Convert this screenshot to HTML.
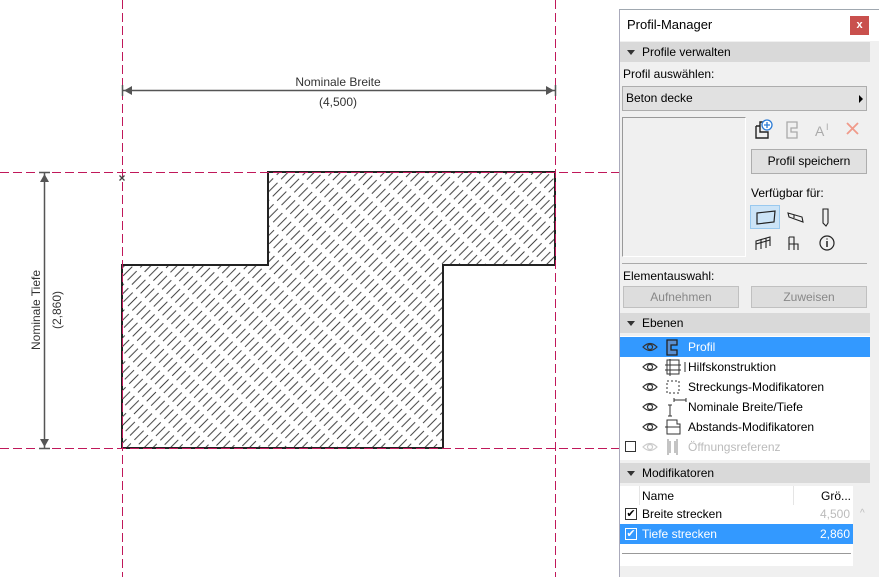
<!DOCTYPE html>
<html><head><meta charset="utf-8"><style>
*{margin:0;padding:0;box-sizing:border-box}
body{width:879px;height:577px;overflow:hidden;background:#fff;font-family:"Liberation Sans",sans-serif;font-size:12px;color:#000;position:relative}
.a{position:absolute}
.hdr{position:absolute;left:620px;width:250px;height:20px;background:#d9d9d9;font-size:12px;line-height:20px;padding-left:22px}
.hdr:before{content:"";position:absolute;left:7px;top:8px;border-left:4px solid transparent;border-right:4px solid transparent;border-top:5px solid #333}
.btn{position:absolute;background:#e1e1e1;border:1px solid #adadad;text-align:center;line-height:22px}
.row{position:absolute;left:620px;width:250px;height:20px;line-height:20px}
.row .t{position:absolute;left:68px}
.row svg{position:absolute;left:0;top:0}
</style></head><body>
<svg class="a" style="left:0;top:0" width="620" height="577">
<defs>
<pattern id="h" width="18" height="6.2" patternUnits="userSpaceOnUse" patternTransform="rotate(-45)">
<line x1="0" y1="3.1" x2="18" y2="3.1" stroke="#111" stroke-width="0.8" stroke-dasharray="13,5"/>
</pattern>
</defs>
<polygon points="268,172 555,172 555,265 443,265 443,448 122,448 122,265 268,265" fill="url(#h)" stroke="#222" stroke-width="2"/>
<g stroke="#c0185a" stroke-width="1" stroke-dasharray="9,4">
<line x1="122.5" y1="0" x2="122.5" y2="577"/>
<line x1="555.5" y1="0" x2="555.5" y2="577"/>
<line x1="0" y1="172.5" x2="620" y2="172.5"/>
<line x1="0" y1="448.5" x2="620" y2="448.5"/>
</g>
<g stroke="#555" stroke-width="1.5" fill="#555">
<line x1="123" y1="90.5" x2="555" y2="90.5"/>
<line x1="122.5" y1="85" x2="122.5" y2="96"/><line x1="555.5" y1="85" x2="555.5" y2="96"/>
<polygon points="124,90.5 132,86 132,95" stroke="none"/>
<polygon points="554,90.5 546,86 546,95" stroke="none"/>
<line x1="44.5" y1="173" x2="44.5" y2="448"/>
<line x1="39" y1="172.5" x2="50" y2="172.5"/><line x1="39" y1="448.5" x2="50" y2="448.5"/>
<polygon points="44.5,174 40,182 49,182" stroke="none"/>
<polygon points="44.5,447 40,439 49,439" stroke="none"/>
</g>
<text x="338" y="86" font-size="12" fill="#333" text-anchor="middle" font-family="Liberation Sans">Nominale Breite</text>
<text x="338" y="106" font-size="12" fill="#333" text-anchor="middle" font-family="Liberation Sans">(4,500)</text>
<g transform="translate(40,310) rotate(-90)" font-size="12" fill="#333" font-family="Liberation Sans" text-anchor="middle">
<text x="0" y="0">Nominale Tiefe</text><text x="0" y="21">(2,860)</text></g>
<path d="M119.5,175.5 l5,5 M124.5,175.5 l-5,5" stroke="#444" stroke-width="1.3"/>
</svg>
<div class="a" style="left:619px;top:9px;width:260px;height:568px;background:#f0f0f0;border-left:1px solid #aab;border-top:1px solid #a0a8b0"></div>
<div class="a" style="left:620px;top:10px;width:259px;height:31px;background:#fff"></div>
<div class="a" style="left:627px;top:17px;font-size:13px">Profil-Manager</div>
<div class="a" style="left:850px;top:16px;width:19px;height:19px;background:#c9504d;color:#fff;font-size:11px;text-align:center;line-height:18px;font-weight:bold">x</div>
<div class="hdr" style="top:42px">Profile verwalten</div>
<div class="a" style="left:623px;top:67px">Profil auswählen:</div>
<div class="a" style="left:622px;top:86px;width:245px;height:25px;background:#e1e1e1;border:1px solid #adadad;line-height:23px;padding-left:3px">Beton decke<span style="position:absolute;right:3px;top:8px;border-top:4px solid transparent;border-bottom:4px solid transparent;border-left:4px solid #000"></span></div>
<div class="a" style="left:622px;top:117px;width:124px;height:140px;border:1px solid #999;border-right-color:#fff;border-bottom-color:#fff;background:#f0f0f0"></div>
<svg class="a" style="left:752px;top:118px" width="115" height="22">
<path d="M4,8 h4 v-4 h4 M4,8 v12 h12 v-6 h-8 v-6" fill="none" stroke="#222" stroke-width="1.4"/>
<circle cx="15" cy="7" r="5" fill="#fff" stroke="#2a7ad5" stroke-width="1.3"/><path d="M15,4v6M12,7h6" stroke="#2a7ad5" stroke-width="1.3"/>
<path d="M35,4 h10 v6 h-6 v4 h6 v6 h-10 z" fill="none" stroke="#aaa" stroke-width="1.3"/>
<text x="63" y="18" font-size="14" fill="#aaa" font-family="Liberation Sans">A</text><text x="74" y="12" font-size="9" fill="#aaa">I</text>
<path d="M95,5 l11,11 M106,5 l-11,11" stroke="#f09a8a" stroke-width="1.8"/>
</svg>
<div class="btn" style="left:751px;top:149px;width:116px;height:25px">Profil speichern</div>
<div class="a" style="left:751px;top:186px">Verfügbar für:</div>
<div class="a" style="left:750px;top:205px;width:30px;height:24px;background:#cce4f7;border:1px solid #99c9ef"></div>
<svg class="a" style="left:750px;top:205px" width="100" height="50">
<path d="M7,8 L25,6 L24,17 L7,19 Z" fill="none" stroke="#222" stroke-width="1.2"/>
<path d="M38,8 L52,12 L53,17 L39,12 Z M44,10 v3" fill="none" stroke="#222" stroke-width="1.1"/>
<path d="M73,4 h5 v14 l-2,3 l-3,-3 z" fill="none" stroke="#222" stroke-width="1.1"/>
<path d="M6,45 v-9 l14,-4 v9 M6,39 l14,-4 M11,34 v10 M16,33 v10" fill="none" stroke="#222" stroke-width="1.1"/>
<path d="M39,32 h5 v7 h4 v6 M39,32 v13 M39,39 h5 v6" fill="none" stroke="#222" stroke-width="1.1"/>
<circle cx="77" cy="38" r="7" fill="none" stroke="#222" stroke-width="1.2"/><path d="M77,36 v6 M77,33.5 v1" stroke="#222" stroke-width="1.5"/>
</svg>
<div class="a" style="left:622px;top:263px;width:245px;height:1px;background:#aaa"></div>
<div class="a" style="left:623px;top:269px">Elementauswahl:</div>
<div class="btn" style="left:623px;top:286px;width:116px;height:22px;line-height:20px;color:#888;background:#ddd;border-color:#c0c0c0">Aufnehmen</div>
<div class="btn" style="left:751px;top:286px;width:116px;height:22px;line-height:20px;color:#888;background:#ddd;border-color:#c0c0c0">Zuweisen</div>
<div class="hdr" style="top:313px">Ebenen</div>
<div class="a" style="left:620px;top:336px;width:250px;height:124px;background:#fff"></div>
<div class="row" style="top:337px;background:#3399ff;color:#fff"><svg width="70" height="20"><path d="M23,10 q7,-7 14,0 q-7,7 -14,0z" fill="none" stroke="#333" stroke-width="1.2"/><circle cx="30" cy="10" r="2.5" fill="none" stroke="#333" stroke-width="1.2"/><path d="M47,3 h10 v5 h-6 v5 h6 v5 h-10 z" fill="#5a8fd0" stroke="#222" stroke-width="1.3"/></svg><span class="t">Profil</span></div>
<div class="row" style="top:357px"><svg width="70" height="20"><path d="M23,10 q7,-7 14,0 q-7,7 -14,0z" fill="none" stroke="#333" stroke-width="1.2"/><circle cx="30" cy="10" r="2.5" fill="none" stroke="#333" stroke-width="1.2"/><path d="M47,3 h12 v14 h-12z M45,8 h16 M45,13 h16 M50,2 v17 M65,5 v10" fill="none" stroke="#333" stroke-width="1"/></svg><span class="t">Hilfskonstruktion</span></div>
<div class="row" style="top:377px"><svg width="70" height="20"><path d="M23,10 q7,-7 14,0 q-7,7 -14,0z" fill="none" stroke="#333" stroke-width="1.2"/><circle cx="30" cy="10" r="2.5" fill="none" stroke="#333" stroke-width="1.2"/><rect x="47" y="4" width="12" height="12" fill="none" stroke="#333" stroke-dasharray="2,2"/></svg><span class="t">Streckungs-Modifikatoren</span></div>
<div class="row" style="top:397px"><svg width="70" height="20"><path d="M23,10 q7,-7 14,0 q-7,7 -14,0z" fill="none" stroke="#333" stroke-width="1.2"/><circle cx="30" cy="10" r="2.5" fill="none" stroke="#333" stroke-width="1.2"/><path d="M50,8 v11 M48,8 h4 M48,19 h4 M54,3 h12 M54,1 v4 M66,1 v4" fill="none" stroke="#333" stroke-width="1"/></svg><span class="t">Nominale Breite/Tiefe</span></div>
<div class="row" style="top:417px"><svg width="70" height="20"><path d="M23,10 q7,-7 14,0 q-7,7 -14,0z" fill="none" stroke="#333" stroke-width="1.2"/><circle cx="30" cy="10" r="2.5" fill="none" stroke="#333" stroke-width="1.2"/><path d="M47,3 h10 v4 h3 v10 h-13 z M45,10 h15" fill="none" stroke="#333" stroke-width="1"/></svg><span class="t">Abstands-Modifikatoren</span></div>
<div class="row" style="top:437px;color:#bbb"><div class="a" style="left:5px;top:4px;width:11px;height:11px;border:1px solid #333;background:#fff"></div><svg width="70" height="20"><path d="M23,10 q7,-7 14,0 q-7,7 -14,0z" fill="none" stroke="#ccc" stroke-width="1.2"/><circle cx="30" cy="10" r="2.5" fill="none" stroke="#ccc" stroke-width="1.2"/><path d="M48,2 v16 M57,2 v16 M50,4 v12 M55,4 v12" fill="none" stroke="#888" stroke-width="1"/></svg><span class="t">Öffnungsreferenz</span></div>
<div class="hdr" style="top:463px">Modifikatoren</div>
<div class="a" style="left:620px;top:486px;width:233px;height:80px;background:#fff"></div>
<div class="a" style="left:642px;top:489px">Name</div>
<div class="a" style="left:639px;top:486px;width:1px;height:19px;background:#e5e5e5"></div>
<div class="a" style="left:793px;top:486px;width:1px;height:19px;background:#e5e5e5"></div>
<div class="a" style="left:821px;top:489px">Grö...</div>
<div class="row" style="top:504px;width:233px"><div class="a" style="left:5px;top:4px;width:12px;height:12px;border:1px solid #333;font-size:11px;line-height:10px;text-align:center">✔</div><span class="a" style="left:22px">Breite strecken</span><span class="a" style="right:3px;color:#bbb">4,500</span></div>
<div class="row" style="top:524px;width:233px;background:#3399ff;color:#fff"><div class="a" style="left:5px;top:4px;width:12px;height:12px;border:1px solid #fff;font-size:11px;line-height:10px;text-align:center">✔</div><span class="a" style="left:22px">Tiefe strecken</span><span class="a" style="right:3px">2,860</span></div>
<div class="a" style="left:622px;top:553px;width:229px;height:1px;background:#999"></div>
<div class="a" style="left:860px;top:508px;color:#bbb;font-size:10px">^</div>
</body></html>
